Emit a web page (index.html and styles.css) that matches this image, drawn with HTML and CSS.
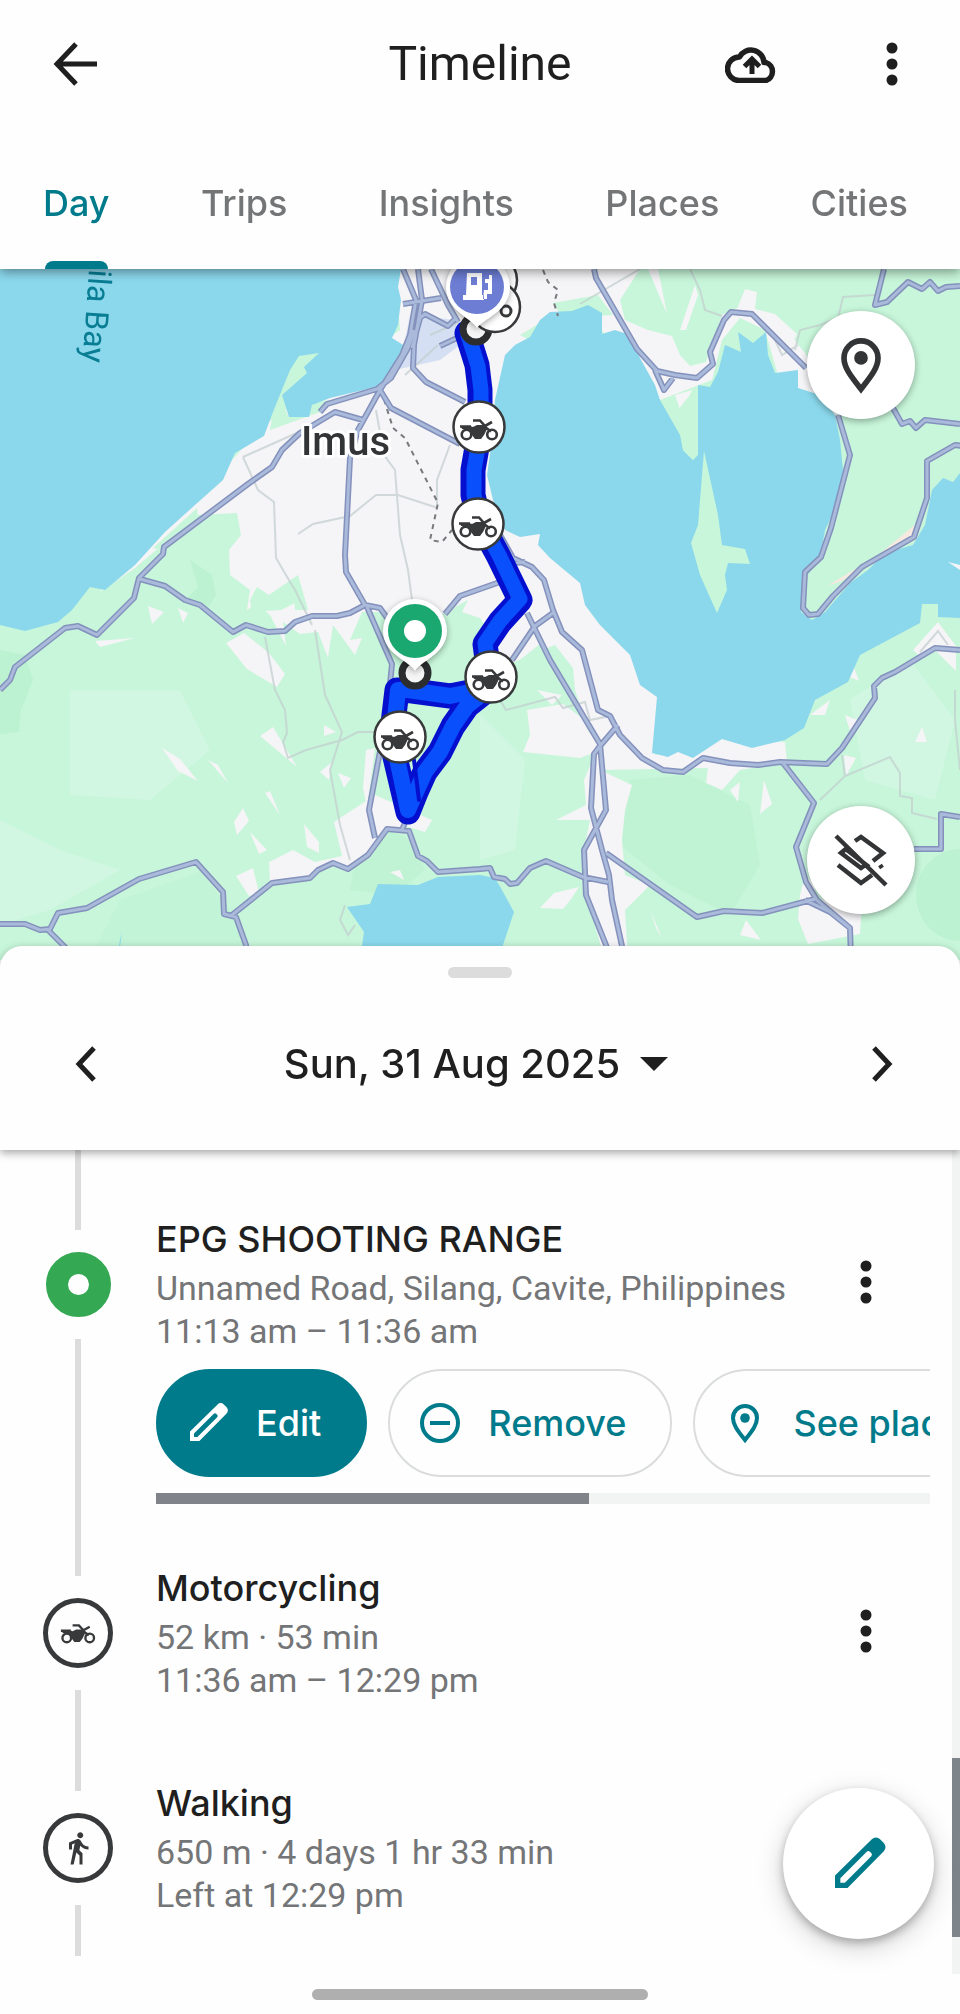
FILE: index.html
```html
<!DOCTYPE html>
<html lang="en">
<head>
<meta charset="utf-8">
<meta name="viewport" content="width=device-width, initial-scale=1">
<title>Timeline</title>
<link rel="stylesheet" href="styles.css">
</head>
<body>
<svg class="defs" aria-hidden="true">
  <defs>
    <symbol id="bike" viewBox="-20 -12 40 24">
      <g fill="none" stroke="#38393b" stroke-width="2.600">
        <circle cx="-12.500" cy="5.500" r="4.800"/><circle cx="13" cy="5.500" r="4.800"/>
        <path d="M-19-2.500h11M-6-8.500h7l5 5.500L13-7M4-3.500l8 6"/>
      </g>
      <path fill="#38393b" d="M-18-3h9l3 1 4-2 7 0 3 4-3 6-3 4h-6l-3-4-2-5-8-1z"/>
    </symbol>
    <symbol id="dots" viewBox="0 0 48 48"><g fill="#1f1f1f"><circle cx="24" cy="8" r="5.500"/><circle cx="24" cy="24" r="5.500"/><circle cx="24" cy="40" r="5.500"/></g></symbol>
    <symbol id="pin" viewBox="0 0 24 24"><path fill="none" stroke="currentColor" stroke-width="2" d="M12 20.500C8.500 16 6 13 6 9.500a6 6 0 0 1 12 0C18 13 15.500 16 12 20.500z"/><circle cx="12" cy="9.500" r="2.400" fill="currentColor"/></symbol>
    <symbol id="pencil" viewBox="0 0 24 24"><path fill="currentColor" fill-rule="evenodd" d="M3 21v-4.700L16.800 2.700a2.200 2.200 0 0 1 3.100 0l1.400 1.400a2.200 2.200 0 0 1 0 3.100L7.700 21zM5 17.300V19h1.700l9.900-9.900a.900.900 0 0 0 0-1.200l-.500-.500a.900.900 0 0 0-1.200 0z"/></symbol>
    <path id="main-roads" d="M0 690L10 680 15 667 65 628 78 626 97 635 134 598 139 578 163 554 164 547 248 484 272 467 282 450 300 433 335 412 363 420M140 579L165 586 185 600 200 605 233 632 246 625 268 632 285 631 295 622 312 616 337 616 350 613 365 605 346 572 345 555 350 458 358 430 380 390 402 355 410 335 416 300 403 269M320 412L327 404 377 389 391 378 408 348 414 330M418 269L422 300 414 345 413 368 426 382 465 402M431 269L448 305 458 322M403 304L441 298M440 346L457 338M412 348L420 318 425 314 448 326 456 318M380 390L391 408 460 444M365 605L380 608 390 622M367 607L392 664 387 714 369 810 375 838M445 614L460 596 500 582M0 924H25L40 930 50 929 58 913 87 908 139 879 196 862 223 892 224 914 236 917 246 945 248 960M48 930L68 950M232 915L272 883 310 878 318 870 333 863 348 869 368 855 387 829 409 831 418 856 427 861 438 872 480 869 490 868 494 877 505 879 510 884 517 883 530 868 546 861 583 877 608 882M402 830L406 820M500 535L513 558 532 567 544 580 553 610 562 632 582 650 598 710 610 716 620 735 642 758 663 770 683 772 703 758 730 763 758 765 780 762 827 764 842 748 875 698 874 686 882 678 895 672 935 648 960 650M527 613L550 660 600 744 606 810 584 850 586 895 610 955M600 746L594 754 591 808 602 850 609 875 612 900 625 960M618 725L600 746M606 853L697 917 724 911 762 913 815 899M783 763L814 803 796 847 806 882 817 900 850 928 851 960M805 900L830 912 850 928M914 849H941V814L960 817M594 269L596 278 637 349 657 371 675 375 697 378 713 364 710 352 724 320 731 312 752 314 806 368M655 370L664 390 673 378M838 415L850 455 831 528 821 557 805 572 803 608 809 615 818 614 833 596 862 567 914 537 927 498 927 461 955 445 963 446M893 408L902 424 910 421 916 428 925 420 960 424M884 269L875 305 887 302 908 282 922 289 930 282 938 291 946 287 960 286M512 660L535 626 553 613M502 564L525 562"/>
  </defs>
</svg>
<div class="app">
  <header class="header">
    <div class="topbar">
      <button class="icon-btn back" aria-label="Back"><svg viewBox="0 0 48 48" width="48" height="48"><path d="M45 24H6M24 4L5 24l19 20" fill="none" stroke="#1f1f1f" stroke-width="5"/></svg></button>
      <h1 class="title">Timeline</h1>
      <div class="actions">
        <button class="icon-btn" aria-label="Backup"><svg viewBox="0 0 54 38" width="54" height="38"><path d="M14 35.500h27a9.500 9.500 0 0 0 0-18h-2A13 13 0 0 0 14.500 12 11.700 11.700 0 0 0 14 35.500z" fill="none" stroke="#1f1f1f" stroke-width="5.500" stroke-linejoin="round"/><path d="M27 29V15M19.500 21.500L27 14l7.500 7.500" fill="none" stroke="#1f1f1f" stroke-width="5"/></svg></button>
        <button class="icon-btn" aria-label="More options"><svg width="48" height="48"><use href="#dots"/></svg></button>
      </div>
    </div>
    <nav class="tabs">
      <a class="tab active" href="#day">Day</a>
      <a class="tab" href="#trips">Trips</a>
      <a class="tab" href="#insights">Insights</a>
      <a class="tab" href="#places">Places</a>
      <a class="tab" href="#cities">Cities</a>
    </nav>
  </header>

  <section class="map" aria-label="Map">
    <svg class="map-art" viewBox="0 269 960 691" preserveAspectRatio="xMidYMin slice">
      <rect y="269" width="960" height="691" fill="#c7f6da"/>
      <!-- relief -->
      <g fill="#b5eecd" opacity=".6">
        <path d="M0 650l25 5 8 25-12 30-2 22-19 2z"/>
        <path d="M190 560l22 15 4 20-8 12-22-8 12-12z"/>
        <path d="M630 780l60-5 60 30 10 60-30 50-60-30-50-40z" opacity=".6"/>
        <ellipse cx="960" cy="895" rx="44" ry="46"/>
        <path d="M355 860l35-30 20 10 15 30-30 25-45-5z" opacity=".6"/>
        <path d="M120 900l80-28 30 38 20 50H90z" opacity=".4"/>
      </g>
      <path fill="#d3f8e3" opacity=".8" d="M0 820l60 30 60 20-70 40-50 15zM70 690l110 0 30 60-60 50-80-5zM480 715l45 45-10 90-35 10zM850 700l60-40 45 60-20 80-70-20z"/>
      <!-- built-up land -->
      <g fill="#f5f4f6">
        <path d="M395 269H560V320L500 420 590 600 680 690 655 755 700 745 720 738 785 742 787 762 740 770 722 790 706 783 708 768 600 770 632 785 625 810 622 840 625 875 650 885 625 910 628 960H605L586 895 584 850 590 820 556 820 586 805 584 780 596 752 580 758 523 752 530 735 527 710 563 704 582 718 590 735 575 690 573 668 555 645 530 655 510 664 512 690 495 640 480 618 462 612 468 600 440 615 420 615 395 625 383 612 362 612 350 640 362 638 355 655 333 625 328 658 318 632 300 634 283 622 286 646 270 615 252 600 274 611 260 608 257 587 275 600 293 587 295 610 308 610 298 575 247 610 250 590 230 575 229 550 241 535 237 513 197 515 135 568 100 592 125 560 223 470 264 425 400 330z"/>
        <path fill="#c7f6da" d="M250 600l7-13 16 11 19-12 5 16-16 8-29 2zM273 412l10-7 6 12 20-1 3-14 18-2-10 12-50 18zM300 357l20-4-17 14zM515 664l25-20 33 28v18l-60-10zM153 548l44-40 2 20-25 25z"/>
        <path d="M226 643l18-10 25 20 16 21-8 13-30-18zM260 736l13-9 24 40zM162 748l18 11 18 22-20-10zM208 760l10 5 10 18zM265 793l5-2 10 24zM234 822l9-14 6 13-12 14zM250 832l17 18-8 4zM304 824l15 18v11l-12-6zM236 876l17-8 6 25-10 3zM95 641l40-3-35 9zM148 606l16 6-12 12zM178 608l10 5-5 10zM324 725l12 7-12 4zM338 773l13 5-7 10zM320 772l12-10-3 18z"/>
        <path d="M269 862L293 850 315 862 342 856 334 822 375 795 432 820 425 832 405 826 385 829 368 855 348 869 332 863 310 877 270 882zM366 750l9-2-8 60-4-20zM390 872l10-2 4 10zM540 908l14-15 25-6-8 12-8 10z"/>
        <path d="M764 780l8 24-12 10zM730 790l10-8-2 20zM800 895l5-20 10 10-1 14 48 5-2 30-52 10-10-25zM740 935l6-15 15 20zM843 655l10 10 6 16-14-6zM913 650l25-28 18 24v25l-20-20-16 5zM845 715l15 6-10 10zM915 742l7-15 5 15zM844 755l12 3-10 18zM650 910l12 28-6-10zM810 715l20-15-5 15zM537 690l25 5-10 10z"/>
        <path d="M560 269H640L620 300 625 320 648 330 672 336 680 355 690 366 706 362 722 315 737 308 775 315 830 385 838 415H790L775 365 765 330 740 318 722 340 712 380 660 400 630 350 600 330 550 316zM648 269h10l9 45zM680 330l15-45 3 10-12 35zM745 289l12 3-2 17 20 5 22 20-8 18-40-38-12-5zM675 395l17-5-10 25z"/>
      </g>
      <path d="M410 315l45 5 5 25-20 15-45 10 10-30z" fill="#cdd9f3" opacity=".8"/>
      <path fill="#c7f6da" d="M553 303l45-8 15 20-50 3zM520 335l20-12 10 5-15 15z"/>
      <path d="M917 523l-3 18-37 15-35 25-15 5 50-30z" fill="#f6e9df"/>
      <!-- water -->
      <g fill="#8bd8ec">
        <path d="M0 269H401L398 287 401 300 398 325 392 338 408 348 406 356 390 375 376 387 330 398 312 405 309 417H289L282 395 307 373 304 367 319 353 299 356 290 370 273 412 264 436 235 453 223 480 195 505 165 532 135 565 105 590 90 587 72 610 58 622 25 631 0 625z"/>
        <path d="M530 337L540 320 550 312 572 311 588 305 602 313V334L615 330 630 335 640 358 655 385 660 400 680 435 683 450 693 460 698 455V385L710 387 718 372 725 345 741 352 738 332 753 343 766 332 768 355 775 373 798 370V388L820 395 835 415 840 440 843 470 840 500 825 530 820 560 803 580 801 612 812 620 825 612 850 583 868 570 885 553 913 545 925 525 932 490 943 478 953 482 960 473V618L938 617V604H922L920 623 860 655 848 682 815 700 804 728 785 740 752 748 722 739 693 758 678 752 668 757 652 753 657 697 640 685 630 655 600 625 585 605 580 583 550 558 538 545 540 534 520 537 505 530 493 500 487 475 492 440 495 400 505 355 515 345z"/>
        <path d="M347 907L370 904 378 884 418 885 438 877 480 875 495 878 502 890 514 912 498 960H360L364 932zM117 960l3-20 2-8-2 15z"/>
      </g>
      <path fill="#c7f6da" d="M704 451L718 515 722 545 745 549 750 564 728 563 725 575 727 590 717 613 700 575 691 543 698 525zM697 386v69l-4 5-10-10-5-40z"/>
      <path fill="#f5f4f6" d="M948 562l12 8v-5z"/>
      <!-- minor roads -->
      <path fill="none" stroke="#c3cfcf" stroke-opacity=".75" stroke-width="2" d="M243 457L310 427M243 457L258 490 274 502 276 558 296 592 312 625M298 534L313 524 350 516 376 495H398L438 508M376 410L384 455 395 470 400 535 408 570 412 600M450 445L437 480V505M438 345L405 375M430 335L460 322M265 637L275 690 285 710 287 733 283 742 288 758 306 750 342 740 358 732H375M315 630L325 695 342 732 330 770 340 825 350 860M500 700L506 710 555 697 563 708 585 702 590 720 610 716M820 800L845 776 890 757 900 773V796L912 798V813L937 819M845 776L842 755M920 652L938 631 948 645M955 690L955 720 960 770M690 269L700 290 705 310 722 316M795 350L800 330 820 325 838 318 843 297 875 295M775 340L782 355 798 345M345 905L340 920 348 935 355 925M640 269l-60 35"/>
      <path fill="none" stroke="#77797c" stroke-width="2" stroke-dasharray="5 5" d="M381 390L393 428 405 438 438 503 430 540 442 542 452 530M543 270L548 282 558 290 554 303 558 316"/>
      <!-- main roads -->
      <g fill="none" stroke-linejoin="round">
        <use href="#main-roads" stroke="#8491bc" stroke-width="6"/>
        <use href="#main-roads" stroke="#a9bada" stroke-width="3"/>
      </g>
      <!-- labels -->
      <text class="map-town" x="301" y="455">Imus</text>
      <text class="map-water" transform="translate(89 269) rotate(94)">ila Bay</text>
      <!-- recorded route -->
      <g fill="none" stroke-linejoin="round" stroke-linecap="round">
        <path stroke="#0510cf" stroke-width="25" d="M467 333l10 32 3 25v40l-7 40 0 25 6 25 19 35 22 45-20 22-15 22 4 30"/>
        <path stroke="#0a4ffc" stroke-width="15" d="M468 335l10 31 3 24v40l-7 40 0 25 6 25 19 35 21 44-20 22-15 22 4 30"/>
        <path stroke="#0510cf" stroke-width="25" d="M490 688l-40 8-45-6-8 0-6 50 17 72 8-20 9-20 15-20 13-26 14-20 25-20"/>
        <path stroke="#0a4ffc" stroke-width="16" d="M490 688l-40 8-42-6-10 0-5 50 15 70 8-18 9-20 15-20 13-26 14-20 25-20"/>
        <path stroke="#0510cf" stroke-width="4" d="M414 760l5 40"/>
      </g>
      <g fill="#f5f5f5" stroke="#2c2d2f" stroke-width="7"><circle cx="476" cy="329" r="13"/><circle cx="415" cy="673" r="13"/></g>
      <!-- travel mode markers -->
      <g fill="#fff" stroke="#38393b" stroke-width="2.500">
        <circle cx="492" cy="280" r="25"/><circle cx="495" cy="307" r="25"/>
        <circle cx="479" cy="427" r="25.500"/><circle cx="478" cy="524" r="25.500"/><circle cx="491" cy="677" r="25.500"/><circle cx="400" cy="737" r="25.500"/>
      </g>
      <circle cx="506" cy="311" r="5" fill="none" stroke="#38393b" stroke-width="3"/>
      <use href="#bike" x="459" y="417" width="40" height="24"/>
      <use href="#bike" x="458" y="514" width="40" height="24"/>
      <use href="#bike" x="471" y="667" width="40" height="24"/>
      <use href="#bike" x="380" y="727" width="40" height="24"/>
      <!-- place pins -->
      <g class="pins">
        <path fill="#fff" d="M477 328c-4-9-31-17-31-41a32 32 0 0 1 64 0c0 24-27 32-33 41z"/>
        <circle cx="477" cy="287" r="27" fill="#6c7dd3"/>
        <path fill="#fff" fill-rule="evenodd" d="M467 273h15v22h2v5h-21v-5h3zM471 277v8h6v-8zM484 290h4v-7h-3v-4h4v-4h3v19h-5v5h-4z"/>
        <path fill="#fff" d="M415 671c-4-9-32-17-32-40a32 32 0 0 1 64 0c0 23-28 31-32 40z"/>
        <circle cx="415" cy="631" r="27" fill="#1ba870"/><circle cx="415" cy="631" r="11" fill="#fff"/>
      </g>
    </svg>
    <div class="map-actions">
      <button class="round-btn" aria-label="Places on map"><svg width="68" height="68"><use href="#pin"/></svg></button>
      <button class="round-btn" aria-label="Hide layers"><svg viewBox="0 0 54 54" width="54" height="54" fill="none" stroke="#333436" stroke-width="4.500"><path d="M2 3l50 49M21 8l6-4 22 16-10 8M13 15l-6 5 20 15 6-4M4 32l23 18 11-8M13 17l22 17M46 32l2 3"/></svg></button>
    </div>
  </section>

  <section class="sheet">
    <div class="sheet-head">
      <div class="handle"></div>
      <div class="date-row">
        <button class="nav-btn" aria-label="Previous day"><svg viewBox="0 0 22 36" width="22" height="36"><path d="M19 2L4 18l15 16" fill="none" stroke="#1f1f1f" stroke-width="5"/></svg></button>
        <button class="date-btn">Sun, 31 Aug 2025 <svg viewBox="0 0 28 14" width="28" height="14"><path d="M0 0h28L14 14z" fill="#1f1f1f"/></svg></button>
        <button class="nav-btn" aria-label="Next day"><svg viewBox="0 0 22 36" width="22" height="36"><path d="M3 2l15 16L3 34" fill="none" stroke="#1f1f1f" stroke-width="5"/></svg></button>
      </div>
    </div>

    <div class="list-wrap">
      <ol class="timeline">
        <li class="entry first">
          <div class="rail"><span class="line lead"></span><span class="place-dot"></span><span class="line rest"></span></div>
          <div class="body">
            <div class="info">
              <div>
                <h2 class="name">EPG SHOOTING RANGE</h2>
                <p class="detail">Unnamed Road, Silang, Cavite, Philippines</p>
                <p class="detail">11:13 am – 11:36 am</p>
              </div>
              <button class="icon-btn" aria-label="More options"><svg width="48" height="48"><use href="#dots"/></svg></button>
            </div>
            <div class="chips">
              <button class="chip filled"><svg width="48" height="48"><use href="#pencil"/></svg>Edit</button>
              <button class="chip"><svg viewBox="0 0 48 48" width="48" height="48" fill="none" stroke="currentColor" stroke-width="4"><circle cx="24" cy="24" r="18"/><path d="M14 24h20"/></svg>Remove</button>
              <button class="chip"><svg width="48" height="48"><use href="#pin"/></svg>See place details</button>
            </div>
            <div class="chip-scroll"><span></span></div>
          </div>
        </li>
        <li class="entry second">
          <div class="rail"><span class="line lead"></span><span class="mode-dot"><svg width="36" height="22"><use href="#bike"/></svg></span><span class="line rest"></span></div>
          <div class="body">
            <div class="info">
              <div>
                <h2 class="name">Motorcycling</h2>
                <p class="detail">52 km · 53 min</p>
                <p class="detail">11:36 am – 12:29 pm</p>
              </div>
              <button class="icon-btn" aria-label="More options"><svg width="48" height="48"><use href="#dots"/></svg></button>
            </div>
          </div>
        </li>
        <li class="entry third">
          <div class="rail"><span class="line lead"></span><span class="mode-dot"><svg viewBox="0 0 24 24" width="36" height="36" fill="#38393b"><path d="M13.500 5.500c1.100 0 2-.900 2-2s-.900-2-2-2-2 .900-2 2 .900 2 2 2zM9.800 8.900L7 23h2.100l1.800-8 2.100 2v6h2v-7.500l-2.100-2 .600-3C14.800 12 16.800 13 19 13v-2c-1.900 0-3.500-1-4.300-2.400l-1-1.600c-.400-.600-1-1-1.700-1-.300 0-.500.100-.800.100L6 8.300V13h2V9.600l1.800-.700"/></svg></span><span class="line rest"></span></div>
          <div class="body">
            <div class="info">
              <div>
                <h2 class="name">Walking</h2>
                <p class="detail">650 m · 4 days 1 hr 33 min</p>
                <p class="detail">Left at 12:29 pm</p>
              </div>
            </div>
          </div>
        </li>
      </ol>
      <div class="scrollbar"><span></span></div>
      <button class="fab" aria-label="Edit timeline"><svg width="64" height="64"><use href="#pencil"/></svg></button>
    </div>
  </section>
  <footer class="gesture"><span></span></footer>
</div>
</body>
</html>
```

FILE: styles.css
```css
* { box-sizing: border-box; }
body { margin: 0; background: #fefefe; color: #1f1f1f; font-family: Roboto, "Liberation Sans", sans-serif; }
h1, h2, p, ol { margin: 0; padding: 0; font-weight: 400; }
button { border: 0; background: none; padding: 0; font: inherit; color: inherit; }
svg { display: block; flex: none; }
.defs { position: absolute; width: 0; height: 0; }

.header { position: relative; z-index: 2; background: #fefefe; box-shadow: 0 3px 10px rgba(0, 0, 0, .4); }
.topbar { display: grid; grid-template-columns: 1fr auto 1fr; align-items: center; height: 128px; padding: 0 20px; }
.icon-btn { display: flex; align-items: center; justify-content: center; width: 96px; height: 96px; }
.icon-btn.back { width: 112px; }
.title { font-size: 48px; line-height: 64px; }
.actions { display: flex; justify-content: flex-end; gap: 44px; }
.tabs { display: flex; justify-content: space-between; height: 141px; padding: 0 52px 0 43px; }
.tab { position: relative; padding-top: 51px; font-family: Inter, Roboto, sans-serif; font-size: 36px; line-height: 48px; font-weight: 500; color: #747577; text-decoration: none; }
.tab.active { color: #007b8b; }
.tab.active::after { content: ""; position: absolute; left: 2px; right: 2px; bottom: 0; height: 8px; border-radius: 8px 8px 0 0; background: #007b8b; }

.map { position: relative; overflow: hidden; aspect-ratio: 960 / 691; background: #c7f6da; }
.map-art { width: 100%; height: 100%; }
.map-town { font-size: 40px; font-weight: 500; fill: #333436; stroke: #fff; stroke-width: 6px; paint-order: stroke; stroke-linejoin: round; }
.map-water { font-size: 32px; fill: #087d93; }
.pins { filter: drop-shadow(0 2px 3px rgba(0, 0, 0, .35)); }
.map-actions { position: absolute; top: 42px; right: 45px; bottom: 46px; display: flex; flex-direction: column; justify-content: space-between; }
.round-btn { display: flex; align-items: center; justify-content: center; width: 108px; height: 108px; border-radius: 50%; background: #fff; color: #333436; box-shadow: 0 2px 7px rgba(0, 0, 0, .35); }

.sheet { position: relative; margin-top: -14px; }
.sheet-head { position: relative; z-index: 2; height: 204px; padding-top: 21px; border-radius: 22px 22px 0 0; background: #fefefe; box-shadow: 0 3px 9px rgba(0, 0, 0, .35); }
.handle { width: 64px; height: 11px; margin: 0 auto; border-radius: 6px; background: #dcdcdc; }
.date-row { display: flex; align-items: center; justify-content: space-between; height: 172px; padding: 0 30px 0 38px; }
.nav-btn { display: flex; align-items: center; justify-content: center; width: 96px; height: 96px; }
.date-btn { display: flex; align-items: center; gap: 20px; padding-right: 16px; font-family: Inter, Roboto, sans-serif; font-size: 40px; line-height: 56px; font-weight: 500; }

.list-wrap { position: relative; display: flex; min-height: 824px; background: #fefefe; }
.timeline { flex: 1; min-width: 0; list-style: none; }
.entry { display: grid; grid-template-columns: 156px minmax(0, 1fr); }
.rail { display: flex; flex-direction: column; align-items: center; gap: 22px; }
.line { width: 6px; background: #dcdcdc; }
.line.lead { height: 16px; }
.line.rest { flex: 1; }
.first { height: 410px; }
.first .line.lead { height: 80px; }
.first .body { padding-top: 61px; }
.second { height: 215px; }
.third { height: 181px; }
.place-dot { width: 65px; height: 65px; border: 22px solid #34a853; border-radius: 50%; }
.mode-dot { display: flex; align-items: center; justify-content: center; width: 70px; height: 70px; border: 5px solid #38393b; border-radius: 50%; }
.body { padding-right: 22px; }
.info { display: flex; align-items: center; justify-content: space-between; padding-right: 16px; }
.name { font-family: Inter, Roboto, sans-serif; font-size: 36px; line-height: 56px; font-weight: 500; }
.detail { font-size: 34px; line-height: 43px; color: #747577; white-space: nowrap; }
.chips { display: flex; gap: 21px; margin-top: 16px; overflow: hidden; }
.chip { display: flex; flex: none; align-items: center; gap: 24px; height: 108px; padding: 0 44px 0 26px; border: 2px solid #dadcde; border-radius: 54px; font-family: Inter, Roboto, sans-serif; font-size: 36px; font-weight: 500; color: #007b8b; }
.chip.filled { border-color: #007b8b; background: #007b8b; color: #fff; }
.chip-scroll { height: 11px; margin-top: 16px; background: #f2f3f3; }
.chip-scroll span { display: block; width: 56%; height: 100%; background: #80848a; }

.scrollbar { display: flex; width: 8px; background: #f2f3f3; }
.scrollbar span { align-self: flex-end; width: 100%; height: 179px; margin-bottom: 37px; background: #7d858b; }
.fab { position: absolute; right: 26px; bottom: 35px; display: flex; align-items: center; justify-content: center; width: 151px; height: 151px; border-radius: 50%; background: #fff; color: #007b8b; box-shadow: 0 4px 8px rgba(0, 0, 0, .25), 0 8px 28px rgba(0, 0, 0, .18); }
.gesture { display: flex; justify-content: center; height: 40px; padding-top: 15px; background: #fefefe; }
.gesture span { width: 35%; height: 11px; border-radius: 6px; background: #afafaf; }
```
